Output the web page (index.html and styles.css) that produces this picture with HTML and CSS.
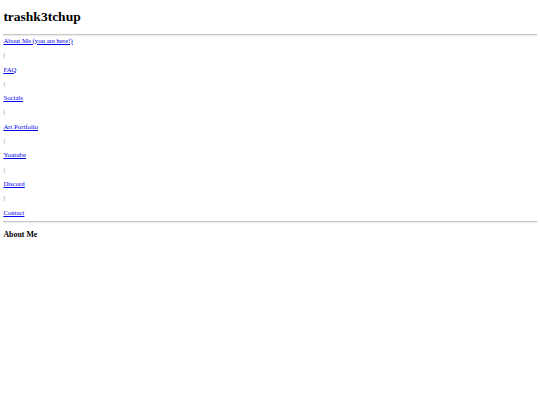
FILE: index.html
```html
<!DOCTYPE html>
<html lang="en">
<head>
<meta charset="utf-8">
<title>trashk3tchup</title>
<link rel="stylesheet" href="styles.css">
</head>
<body class="page">
<h1 class="site-title">trashk3tchup</h1>
<hr class="rule rule-top">
<nav class="nav">
<p class="nav-item"><a class="nav-link" href="#">About Me (you are here!)</a></p>
<p class="nav-sep">|</p>
<p class="nav-item"><a class="nav-link" href="#">FAQ</a></p>
<p class="nav-sep">|</p>
<p class="nav-item"><a class="nav-link" href="#">Socials</a></p>
<p class="nav-sep">|</p>
<p class="nav-item"><a class="nav-link" href="#">Art Portfolio</a></p>
<p class="nav-sep">|</p>
<p class="nav-item"><a class="nav-link" href="#">Youtube</a></p>
<p class="nav-sep">|</p>
<p class="nav-item"><a class="nav-link" href="#">Discord</a></p>
<p class="nav-sep">|</p>
<p class="nav-item"><a class="nav-link" href="#">Contact</a></p>
</nav>
<hr class="rule rule-bottom">
<h3 class="section-title">About Me</h3>
</body>
</html>
```
FILE: styles.css
```css
html {
  background: #ffffff;
}
.page {
  margin: 0;
  padding: 0 3.375px;
  font-family: "Liberation Serif", "Times New Roman", serif;
  font-size: 6.75px;
  color: #000000;
}
.site-title {
  font-size: 13.5px;
  font-weight: bold;
  margin: 9.05px 0 9.05px;
}
.rule {
  margin: 0;
  border: 0;
  border-top: 1px solid #c8c8c8;
  border-bottom: 1px solid #ececec;
  height: 0;
}
.nav {
  display: flex;
  flex-direction: column;
  gap: 7.33px;
  margin: 0.75px 0 4.75px;
}
.nav-item,
.nav-sep {
  margin: 0;
  line-height: 7px;
}
.nav-sep {
  color: #555555;
}
.nav-link {
  color: #0000ee;
  text-decoration: underline;
}
.section-title {
  font-size: 7.9px;
  font-weight: bold;
  margin: 7.9px 0;
}
```
